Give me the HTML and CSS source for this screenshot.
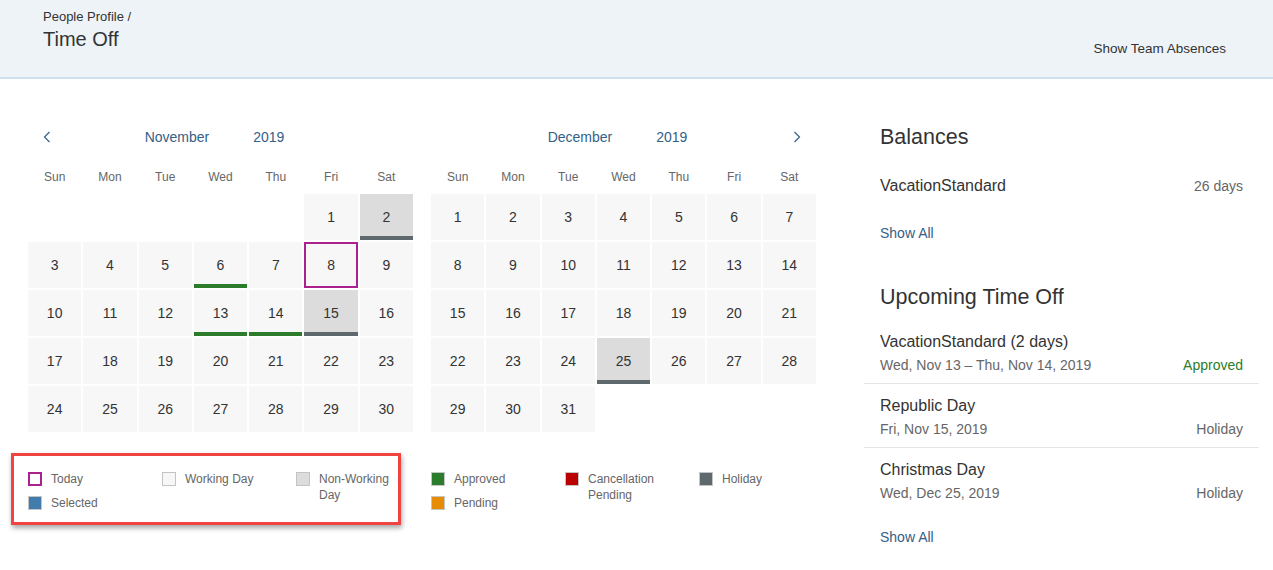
FILE: index.html
```html
<!DOCTYPE html>
<html lang="en">
<head>
    <meta charset="UTF-8">
    <meta name="viewport" content="width=device-width, initial-scale=1.0">
    <title>Time Off</title>
    <link rel="stylesheet" href="styles.css">
</head>
<body>

    <header class="page-header">
        <div class="titles">
            <div class="breadcrumb">People Profile /</div>
            <h1>Time Off</h1>
        </div>
        <a href="#" class="team-link">Show Team Absences</a>
    </header>

    <main class="page">
        <div class="calendar-area">
            <div class="calendars">

                <div class="month">
                    <div class="month-head">
                        <button class="nav-btn" aria-label="Previous">
                            <svg width="8" height="12" viewBox="0 0 8 12"><polyline points="6.5,1 1.5,6 6.5,11" fill="none" stroke="#346187" stroke-width="1.2"/></svg>
                        </button>
                        <div class="month-title">
                            <span>November</span>
                            <span>2019</span>
                        </div>
                        <span></span>
                    </div>
                    <div class="weekdays">
                        <span>Sun</span><span>Mon</span><span>Tue</span><span>Wed</span><span>Thu</span><span>Fri</span><span>Sat</span>
                    </div>
                    <div class="days">
                        <span class="empty"></span><span class="empty"></span><span class="empty"></span><span class="empty"></span><span class="empty"></span>
                        <span class="day">1</span>
                        <span class="day off holiday">2</span>
                        <span class="day">3</span>
                        <span class="day">4</span>
                        <span class="day">5</span>
                        <span class="day approved">6</span>
                        <span class="day">7</span>
                        <span class="day today">8</span>
                        <span class="day">9</span>
                        <span class="day">10</span>
                        <span class="day">11</span>
                        <span class="day">12</span>
                        <span class="day approved">13</span>
                        <span class="day approved">14</span>
                        <span class="day off holiday">15</span>
                        <span class="day">16</span>
                        <span class="day">17</span>
                        <span class="day">18</span>
                        <span class="day">19</span>
                        <span class="day">20</span>
                        <span class="day">21</span>
                        <span class="day">22</span>
                        <span class="day">23</span>
                        <span class="day">24</span>
                        <span class="day">25</span>
                        <span class="day">26</span>
                        <span class="day">27</span>
                        <span class="day">28</span>
                        <span class="day">29</span>
                        <span class="day">30</span>
                    </div>
                </div>

                <div class="month">
                    <div class="month-head">
                        <span></span>
                        <div class="month-title">
                            <span>December</span>
                            <span>2019</span>
                        </div>
                        <button class="nav-btn" aria-label="Next">
                            <svg width="8" height="12" viewBox="0 0 8 12"><polyline points="1.5,1 6.5,6 1.5,11" fill="none" stroke="#346187" stroke-width="1.2"/></svg>
                        </button>
                    </div>
                    <div class="weekdays">
                        <span>Sun</span><span>Mon</span><span>Tue</span><span>Wed</span><span>Thu</span><span>Fri</span><span>Sat</span>
                    </div>
                    <div class="days">
                        <span class="day">1</span>
                        <span class="day">2</span>
                        <span class="day">3</span>
                        <span class="day">4</span>
                        <span class="day">5</span>
                        <span class="day">6</span>
                        <span class="day">7</span>
                        <span class="day">8</span>
                        <span class="day">9</span>
                        <span class="day">10</span>
                        <span class="day">11</span>
                        <span class="day">12</span>
                        <span class="day">13</span>
                        <span class="day">14</span>
                        <span class="day">15</span>
                        <span class="day">16</span>
                        <span class="day">17</span>
                        <span class="day">18</span>
                        <span class="day">19</span>
                        <span class="day">20</span>
                        <span class="day">21</span>
                        <span class="day">22</span>
                        <span class="day">23</span>
                        <span class="day">24</span>
                        <span class="day off holiday">25</span>
                        <span class="day">26</span>
                        <span class="day">27</span>
                        <span class="day">28</span>
                        <span class="day">29</span>
                        <span class="day">30</span>
                        <span class="day">31</span>
                    </div>
                </div>

            </div>

            <div class="legend">
                <div class="legend-box">
                    <div class="legend-col">
                        <div class="legend-item"><span class="swatch sw-today"></span><span class="legend-text">Today</span></div>
                        <div class="legend-item"><span class="swatch sw-selected"></span><span class="legend-text">Selected</span></div>
                    </div>
                    <div class="legend-col">
                        <div class="legend-item"><span class="swatch sw-working"></span><span class="legend-text">Working Day</span></div>
                    </div>
                    <div class="legend-col last">
                        <div class="legend-item"><span class="swatch sw-nonworking"></span><span class="legend-text">Non-Working Day</span></div>
                    </div>
                </div>
                <div class="legend-rest">
                    <div class="legend-col">
                        <div class="legend-item"><span class="swatch sw-approved"></span><span class="legend-text">Approved</span></div>
                        <div class="legend-item"><span class="swatch sw-pending"></span><span class="legend-text">Pending</span></div>
                    </div>
                    <div class="legend-col">
                        <div class="legend-item"><span class="swatch sw-cancel"></span><span class="legend-text">Cancellation Pending</span></div>
                    </div>
                    <div class="legend-col">
                        <div class="legend-item"><span class="swatch sw-holiday"></span><span class="legend-text">Holiday</span></div>
                    </div>
                </div>
            </div>
        </div>

        <aside class="side">
            <h2>Balances</h2>
            <div class="balance-row">
                <span class="row-title">VacationStandard</span>
                <span class="row-value">26 days</span>
            </div>
            <a href="#" class="show-all">Show All</a>

            <h2 class="upcoming-title">Upcoming Time Off</h2>
            <div class="upcoming-list">
                <div class="upcoming-item">
                    <div class="row-title">VacationStandard (2 days)</div>
                    <div class="item-sub">
                        <span>Wed, Nov 13 – Thu, Nov 14, 2019</span>
                        <span class="status-approved">Approved</span>
                    </div>
                </div>
                <div class="upcoming-item">
                    <div class="row-title">Republic Day</div>
                    <div class="item-sub">
                        <span>Fri, Nov 15, 2019</span>
                        <span>Holiday</span>
                    </div>
                </div>
                <div class="upcoming-item">
                    <div class="row-title">Christmas Day</div>
                    <div class="item-sub">
                        <span>Wed, Dec 25, 2019</span>
                        <span>Holiday</span>
                    </div>
                </div>
            </div>
            <a href="#" class="show-all">Show All</a>
        </aside>
    </main>

</body>
</html>
```

FILE: styles.css
```css
body {
    margin: 0;
    font-family: 'Liberation Sans', Arial, sans-serif;
    color: #333;
    background: #fff;
}

/* top bar */

.page-header {
    display: flex;
    justify-content: space-between;
    align-items: flex-start;
    height: 79px;
    box-sizing: border-box;
    padding: 8px 47px 0 43px;
    background: #eef3f8;
    border-bottom: 2px solid #d1e0ee;
}

.breadcrumb {
    font-size: 13px;
    line-height: 18px;
    color: #333;
}

h1 {
    margin: 0;
    font-size: 20px;
    line-height: 26px;
    font-weight: normal;
    color: #333;
}

.team-link {
    margin-top: 31px;
    font-size: 13.5px;
    line-height: 20px;
    color: #333;
    text-decoration: none;
}

/* main layout */

.page {
    display: flex;
    gap: 48px;
    padding: 42px 14px 0 28px;
}

.calendar-area {
    width: 788px;
}

.calendars {
    display: flex;
    gap: 18px;
}

.month {
    width: 385px;
}

.month-head {
    display: grid;
    grid-template-columns: 38px 1fr 38px;
    height: 32px;
    align-items: center;
}

.nav-btn {
    background: none;
    border: none;
    padding: 0;
    height: 32px;
    cursor: pointer;
    display: flex;
    align-items: center;
    justify-content: center;
}

.month-title {
    display: flex;
    justify-content: center;
    gap: 44px;
    padding-right: 12px;
    font-size: 14px;
    color: #346187;
}

.weekdays {
    display: grid;
    grid-template-columns: repeat(7, 1fr);
    column-gap: 2px;
    margin-top: 9px;
    height: 30px;
    line-height: 30px;
    font-size: 12px;
    color: #666;
    text-align: center;
}

.days {
    display: grid;
    grid-template-columns: repeat(7, 1fr);
    grid-auto-rows: 46px;
    gap: 2px;
    margin-top: 2px;
}

.day {
    display: flex;
    align-items: center;
    justify-content: center;
    background: #f7f7f7;
    font-size: 14px;
    color: #333;
}

.day.off {
    background: #dcdcdc;
}

.day.holiday {
    box-shadow: inset 0 -4px 0 #5e696e;
}

.day.approved {
    box-shadow: inset 0 -4px 0 #2b7d2b;
}

.day.today {
    box-shadow: inset 0 0 0 2px #ab218e;
}

/* legend */

.legend {
    display: flex;
    align-items: flex-start;
    margin: 21px 0 0 -17px;
}

.legend-box {
    display: flex;
    flex: none;
    border: 3px solid #f24343;
    padding: 15px 9px 11px 14px;
    box-shadow: 1px 3px 5px rgba(0, 0, 0, 0.35);
}

.legend-rest {
    display: flex;
    flex: none;
    margin-left: 30px;
    padding-top: 18px;
}

.legend-col {
    flex: none;
    width: 134px;
}

.legend-col.last {
    width: auto;
}

.legend-item {
    display: flex;
    gap: 9px;
    font-size: 12px;
    line-height: 16px;
    color: #666;
}

.legend-item + .legend-item {
    margin-top: 8px;
}

.legend-text {
    max-width: 80px;
}

.legend-col.last .legend-text {
    max-width: 70px;
}

.swatch {
    flex: none;
    width: 14px;
    height: 14px;
    margin-top: 1px;
    box-sizing: border-box;
    border: 1px solid #c4c4c4;
}

.sw-today { border: 2px solid #ab218e; background: #fff; }
.sw-selected { background: #427cac; }
.sw-working { background: #f7f7f7; }
.sw-nonworking { background: #dcdcdc; }
.sw-approved { background: #2b7d2b; }
.sw-pending { background: #e78c07; }
.sw-cancel { background: #bb0000; }
.sw-holiday { background: #5e696e; }

/* side panel */

.side {
    width: 395px;
}

.side h2 {
    margin: 0 16px 10px;
    font-size: 21.5px;
    line-height: 32px;
    font-weight: normal;
    color: #333;
}

.side .upcoming-title {
    margin-top: 38px;
    margin-bottom: 7px;
}

.balance-row {
    display: flex;
    justify-content: space-between;
    align-items: baseline;
    padding: 13px 16px 11px;
    line-height: 20px;
}

.row-title {
    font-size: 16px;
    line-height: 20px;
    color: #333;
}

.row-value {
    font-size: 14px;
    color: #666;
}

.show-all {
    display: block;
    margin: 16px 16px 0;
    font-size: 14px;
    line-height: 20px;
    color: #346187;
    text-decoration: none;
}

.upcoming-item {
    padding: 12px 16px 8px;
    border-bottom: 1px solid #e5e5e5;
}

.upcoming-item:last-child {
    border-bottom: none;
}

.item-sub {
    display: flex;
    justify-content: space-between;
    margin-top: 3px;
    font-size: 14px;
    line-height: 20px;
    color: #666;
}

.status-approved {
    color: #2b7d2b;
}
```
